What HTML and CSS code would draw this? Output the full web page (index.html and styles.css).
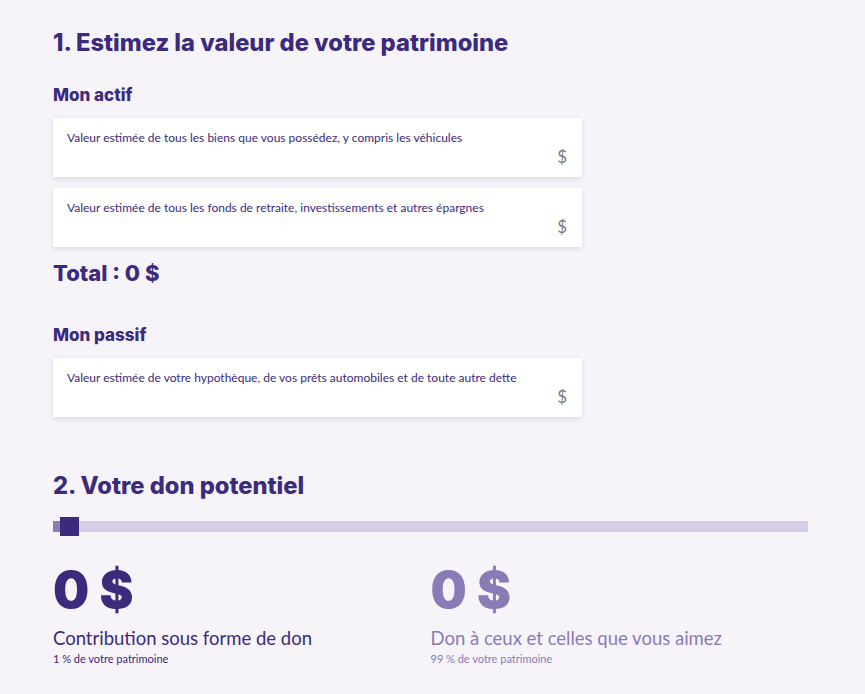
FILE: index.html
```html
<!DOCTYPE html>
<html>
	<head>
		<title>Votre patrimoine</title>
		<link rel="stylesheet" href="styles.css">
	</head>
	<body>
		<div class="page">
			<h1 class="step-title">1. Estimez la valeur de votre patrimoine</h1>

			<h2 class="group-title">Mon actif</h2>
			<div class="field">
				<span class="field-label">Valeur estimée de tous les biens que vous possédez, y compris les véhicules</span>
				<span class="field-unit">$</span>
			</div>
			<div class="field">
				<span class="field-label">Valeur estimée de tous les fonds de retraite, investissements et autres épargnes</span>
				<span class="field-unit">$</span>
			</div>
			<div class="total">Total : 0 $</div>

			<h2 class="group-title passif">Mon passif</h2>
			<div class="field">
				<span class="field-label">Valeur estimée de votre hypothèque, de vos prêts automobiles et de toute autre dette</span>
				<span class="field-unit">$</span>
			</div>

			<h1 class="step-title second">2. Votre don potentiel</h1>
			<div class="slider">
				<div class="slider-fill"></div>
				<div class="slider-thumb"></div>
			</div>

			<div class="results">
				<div class="result">
					<div class="amount">0 $</div>
					<div class="result-label">Contribution sous forme de don</div>
					<div class="result-note">1 % de votre patrimoine</div>
				</div>
				<div class="result light">
					<div class="amount">0 $</div>
					<div class="result-label">Don à ceux et celles que vous aimez</div>
					<div class="result-note">99 % de votre patrimoine</div>
				</div>
			</div>
		</div>
	</body>
</html>
```

FILE: styles.css
```css
* {
	box-sizing: border-box;
}
html,body {
	width: 100%;
	height: 100%;
}
body {
	margin: 0;
	background-color: #f6f3f9;
	color: #3c2a7c;
	font-family: Lato, "Noto Sans", sans-serif;
}
.page {
	padding: 28px 0 0 53px;
	width: 808px;
}
.step-title {
	margin: 0;
	font-family: Inter, Lato, sans-serif;
	font-size: 23.7px;
	font-weight: 800;
	line-height: 30px;
}
.step-title.second {
	margin-top: 54px;
}
.group-title {
	margin: 26px 0 12px;
	font-family: Inter, Lato, sans-serif;
	font-size: 17px;
	font-weight: 800;
	line-height: 22px;
}
.group-title.passif {
	margin-top: 36px;
}
.field {
	width: 529px;
	height: 59px;
	margin-bottom: 11px;
	background: #fff;
	box-shadow: 0 2px 5px rgba(60, 42, 124, 0.12);
	padding: 12px 14px 0 14px;
	display: flex;
	flex-direction: column;
}
.field-label {
	font-size: 12px;
	line-height: 16px;
	color: #3c2a7c;
}
.field-unit {
	align-self: flex-end;
	font-size: 17px;
	line-height: 20px;
	color: #7a7a7a;
	margin-top: 1px;
	margin-right: 1px;
}
.total {
	margin-top: 9px;
	font-family: Inter, Lato, sans-serif;
	font-size: 22px;
	font-weight: 800;
	line-height: 30px;
}
.slider {
	position: relative;
	margin-top: 20px;
	height: 11px;
	background: #d8cde6;
}
.slider-fill {
	width: 8px;
	height: 100%;
	background: #8a7bb7;
}
.slider-thumb {
	position: absolute;
	left: 7px;
	top: -4px;
	width: 19px;
	height: 19px;
	background: #3c2a7c;
}
.results {
	display: grid;
	grid-template-columns: 1fr 1fr;
	margin-top: 28px;
}
.amount {
	font-family: Inter, Lato, sans-serif;
	font-size: 51px;
	font-weight: 900;
	line-height: 60px;
}
.result-label {
	margin-top: 8px;
	font-size: 18.5px;
	line-height: 20px;
}
.result-note {
	margin-top: 4px;
	font-size: 11px;
	line-height: 14px;
}
.result.light {
	color: #8a7bb7;
}
```
